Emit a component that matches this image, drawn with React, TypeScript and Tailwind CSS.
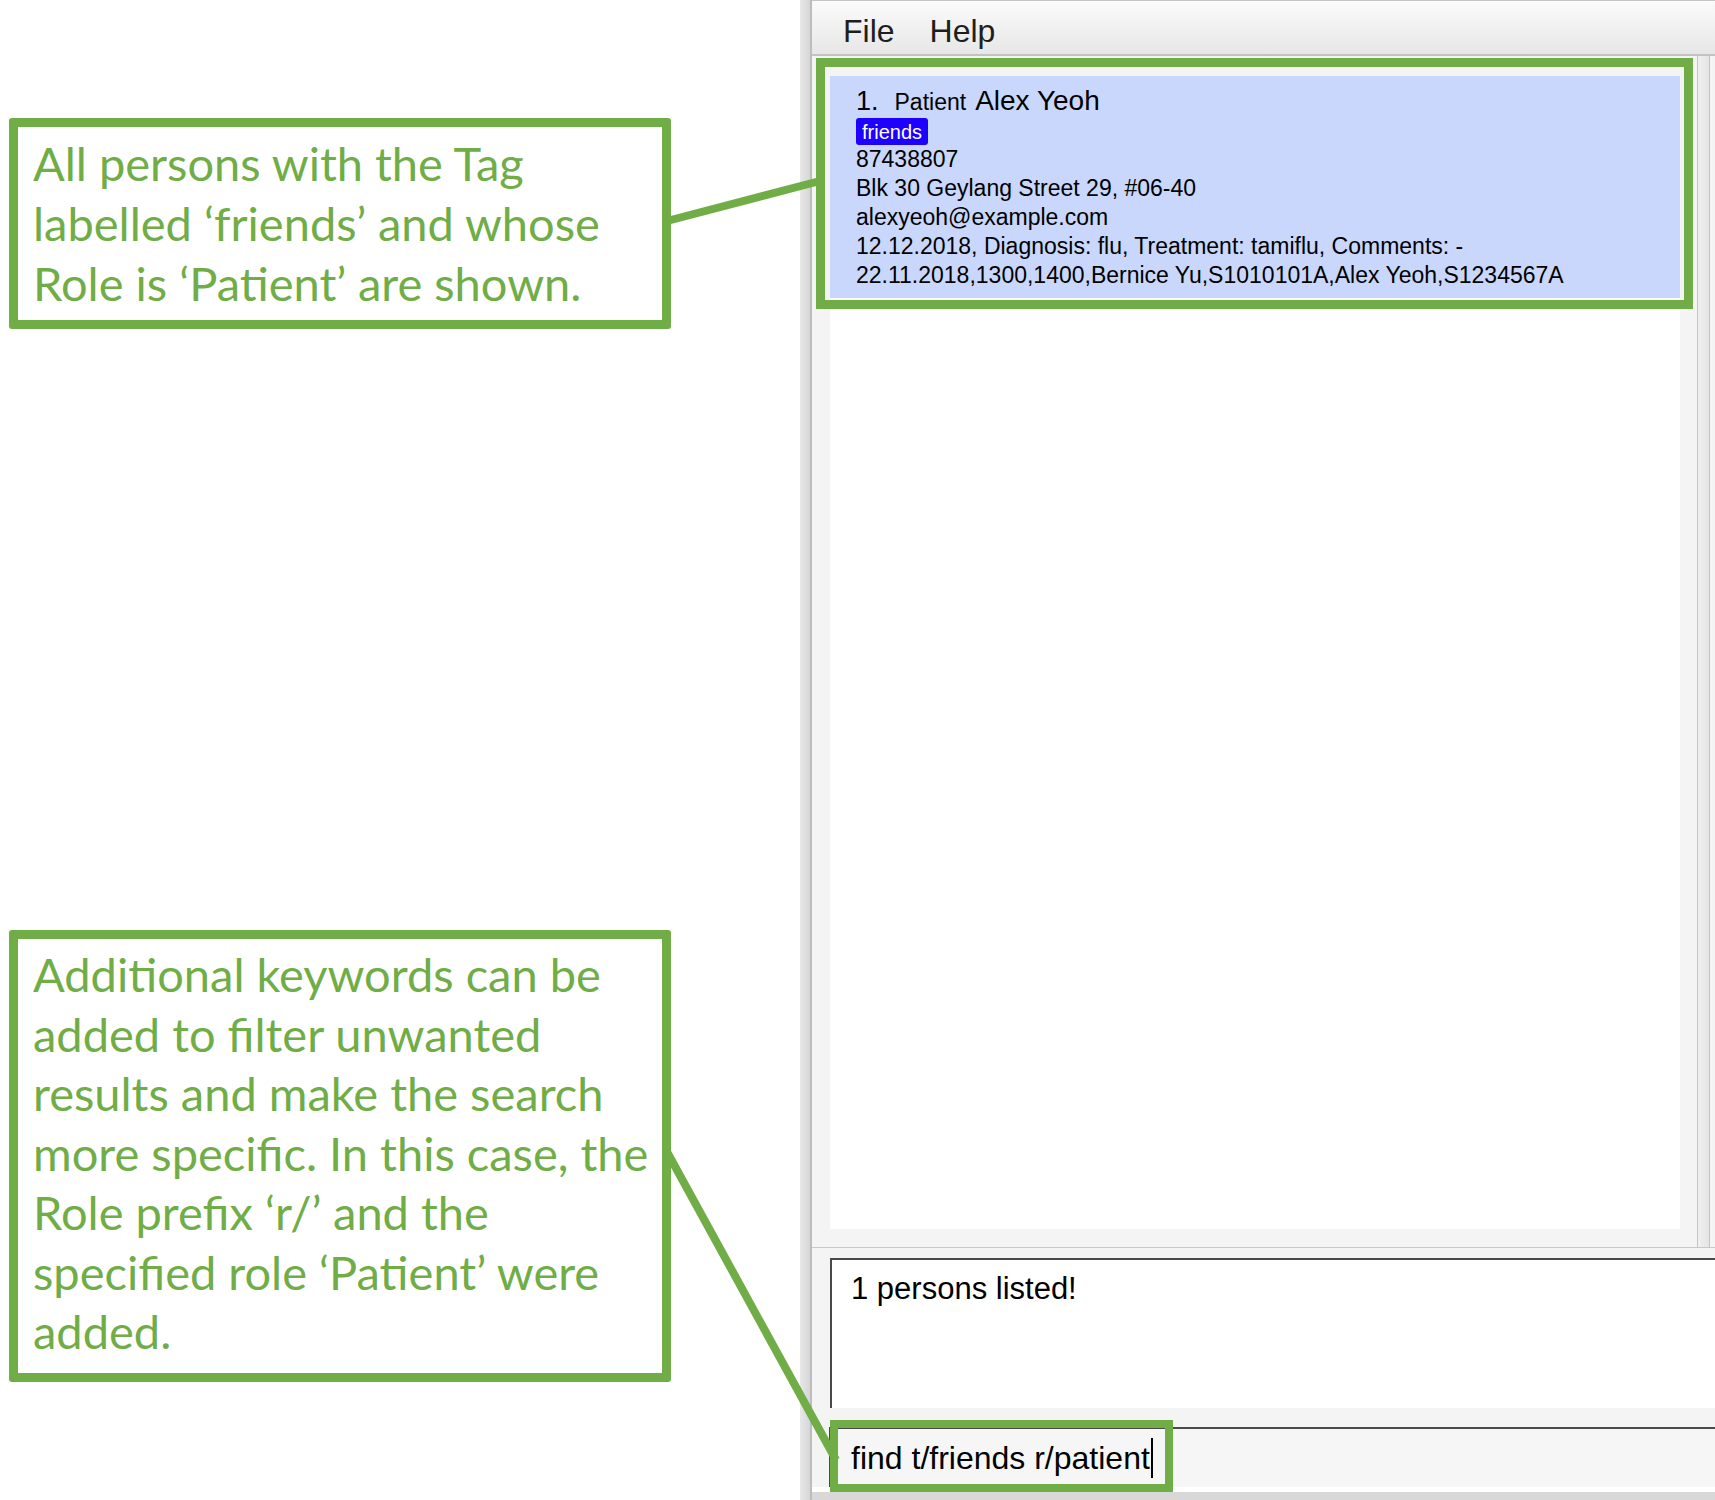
import React from "react";

const GREEN = "#70ad47";

function Callout(props: { lines: string[]; className?: string }) {
  return (
    <div
      className={`w-[662px] rounded-[3px] border-[9px] border-[#70ad47] bg-white px-[15px] text-[#70ad47] ${props.className ?? ""}`}
      style={{ fontFamily: "Lato, 'Open Sans', sans-serif" }}
    >
      {props.lines.map((line, i) => (
        <div key={i} className="whitespace-nowrap">
          {line}
        </div>
      ))}
    </div>
  );
}

function PersonCard() {
  return (
    <div className="h-[222px] bg-[#c9d7fd] pl-[26px] pt-[11px] text-black">
      <div className="flex h-[28px] items-baseline leading-[28px]">
        <span className="text-[27px]">1.</span>
        <span className="ml-[16px] text-[23px]">Patient</span>
        <span className="ml-[9px] text-[28px]">Alex Yeoh</span>
      </div>
      <div className="mt-[3px] flex">
        <span className="flex h-[27px] items-center rounded-[3px] bg-[#1e00ff] px-[6px] text-[20px] text-white">
          friends
        </span>
      </div>
      <div className="text-[23px] leading-[29px]">
        <div>87438807</div>
        <div>Blk 30 Geylang Street 29, #06-40</div>
        <div>alexyeoh@example.com</div>
        <div>12.12.2018, Diagnosis: flu, Treatment: tamiflu, Comments: -</div>
        <div>22.11.2018,1300,1400,Bernice Yu,S1010101A,Alex Yeoh,S1234567A</div>
      </div>
    </div>
  );
}

function AppWindow() {
  return (
    <div className="flex h-[1500px] w-[915px] overflow-hidden" style={{ fontFamily: "'Liberation Sans', Arial, sans-serif" }}>
      <div className="w-[12px] shrink-0 border-r-2 border-[#bdbdbd] bg-gradient-to-r from-[#e8e8e8] to-[#d6d6d6]" />
      <div className="flex w-[903px] shrink-0 flex-col bg-[#f4f4f4]">
        {/* menu bar */}
        <div className="flex h-[56px] shrink-0 items-center gap-[35px] border-t border-b-2 border-t-[#c6c6c6] border-b-[#c2c2c2] bg-gradient-to-b from-[#fbfbfb] to-[#e7e7e7] pl-[31px] pt-[6px] text-[32px] text-[#1e1e1e]">
          <span>File</span>
          <span>Help</span>
        </div>

        {/* person list */}
        <div className="flex h-[1191px] shrink-0">
          <div className="ml-[18px] mt-[2px] mb-[18px] w-[850px] bg-white">
            <div className="bg-[#f4f4f4] pt-[18px]">
              <PersonCard />
            </div>
          </div>
          <div className="ml-[17px] w-[13px] border-x border-[#c4c4c4] bg-gradient-to-r from-[#f0f0f0] to-[#e4e4e4]" />
        </div>

        <div className="h-px shrink-0 bg-[#c8c8c8]" />

        {/* result display */}
        <div className="shrink-0 pt-[10px] pl-[18px]">
          <div className="h-[150px] border-t-2 border-l-2 border-[#4a4a4a] bg-white pl-[19px] pt-[11px] text-[31px] leading-[36px] text-black">
            1 persons listed!
          </div>
        </div>

        {/* command box */}
        <div className="mt-[19px] shrink-0 pl-[17px]">
          <div className="flex h-[60px] items-center border-t-2 border-l-2 border-[#4a4a4a] bg-[#f6f6f6] pl-[20px] text-[32px] text-black">
            <span>find t/friends r/patient</span>
            <span className="ml-[1px] h-[40px] w-[2px] bg-black" />
          </div>
        </div>

        <div className="h-[5px] shrink-0 bg-white" />
        <div className="flex-1 bg-[#d8d8d8]" />
      </div>
    </div>
  );
}

export default function App() {
  return (
    <div className="relative flex h-[1500px] w-[1715px] overflow-hidden bg-white">
      <div className="flex w-[800px] shrink-0 flex-col pl-[9px]">
        <Callout
          className="mt-[118px] h-[211px] pt-[6px] text-[47px] leading-[60px]"
          lines={["All persons with the Tag", "labelled \u2018friends\u2019 and whose", "Role is \u2018Patient\u2019 are shown."]}
        />
        <Callout
          className="mt-[601px] h-[452px] pt-[6px] text-[47px] leading-[59.5px]"
          lines={[
            "Additional keywords can be",
            "added to filter unwanted",
            "results and make the search",
            "more specific. In this case, the",
            "Role prefix \u2018r/\u2019 and the",
            "specified role \u2018Patient\u2019 were",
            "added.",
          ]}
        />
      </div>

      <AppWindow />

      {/* annotation highlights */}
      <div className="pointer-events-none absolute left-[816px] top-[58px] h-[251px] w-[877px] border-[9px] border-[#70ad47]" />
      <div className="pointer-events-none absolute left-[830px] top-[1420px] h-[72px] w-[343px] border-[8px] border-[#70ad47]" />
      <svg className="pointer-events-none absolute left-0 top-0" width={1715} height={1500}>
        <line x1={667} y1={221} x2={820} y2={181} stroke={GREEN} strokeWidth={8} />
        <line x1={666} y1={1150} x2={836} y2={1460} stroke={GREEN} strokeWidth={8} />
      </svg>
    </div>
  );
}
